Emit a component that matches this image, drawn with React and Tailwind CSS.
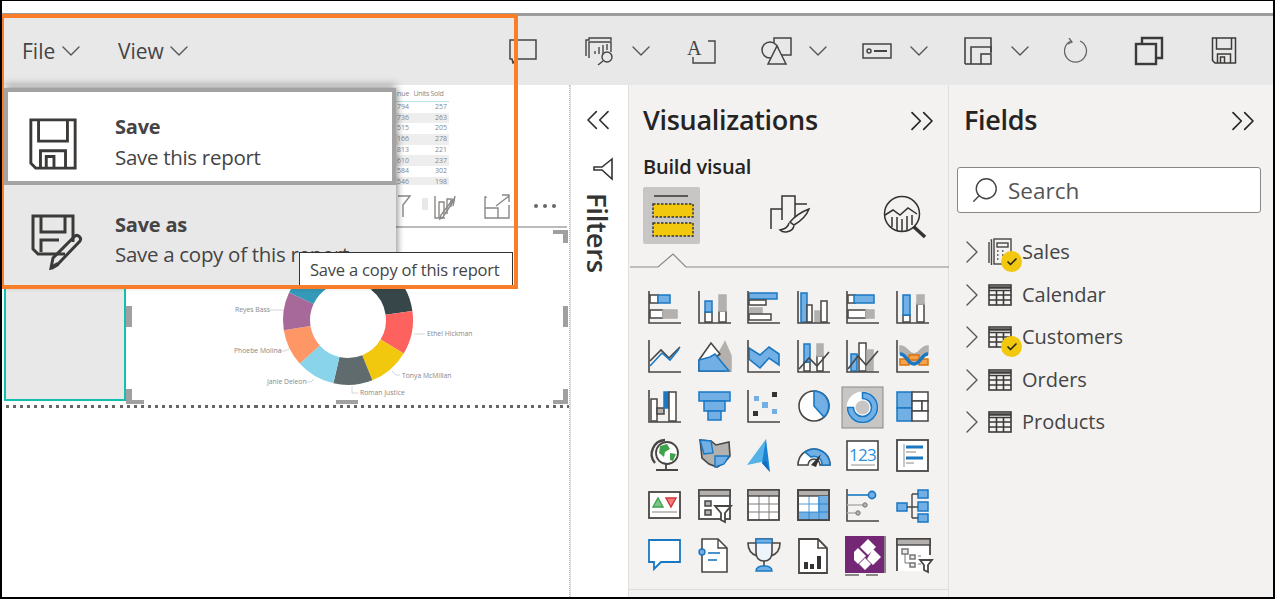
import { ChevronDown, ChevronRight, ChevronsLeft, ChevronsRight, Search, Check } from 'lucide-react';

const D = '#484644';
const B = '#1a78c2';
const F = '#71afe5';
const G = '#b3b0ad';

const font = { fontFamily: '"Open Sans", sans-serif' };

// axis shared by most of the chart icons
const Axis = () => <path d="M1 0v32h32" fill="none" stroke={D} strokeWidth="1.6" />;
const Box = ({ x, y, w, h, f = '#fff', s = D }) => (
  <rect x={x} y={y} width={w} height={h} fill={f} stroke={s} strokeWidth="1.5" />
);
const Line = ({ d, s = D, w = 1.6, f = 'none' }) => <path d={d} fill={f} stroke={s} strokeWidth={w} />;

const vizIcons = [
  <><Box x={2} y={4} w={8} h={8} /><Box x={10} y={4} w={12} h={8} f={F} s={B} /><Box x={2} y={19} w={13} h={8} /><Box x={15} y={19} w={14} h={8} f={G} s={G} /><Axis /></>,
  <><Box x={7} y={21} w={7} h={10} /><Box x={7} y={10} w={7} h={11} f={F} s={B} /><Box x={21} y={20} w={7} h={11} /><Box x={21} y={4} w={7} h={16} f={G} s={G} /><Axis /></>,
  <><Box x={2} y={2} w={28} h={6} f={F} s={B} /><Box x={2} y={9} w={17} h={5} /><Box x={2} y={17} w={13} h={5} f={G} s={G} /><Box x={2} y={23} w={22} h={6} /><Axis /></>,
  <><Box x={4} y={2} w={6} h={29} f={F} s={B} /><Box x={10} y={14} w={5} h={17} /><Box x={18} y={20} w={5} h={11} f={G} s={G} /><Box x={24} y={10} w={6} h={21} /><Axis /></>,
  <><Box x={2} y={4} w={7} h={8} /><Box x={8} y={4} w={20} h={8} f={F} s={B} /><Box x={2} y={19} w={18} h={8} /><Box x={20} y={19} w={8} h={8} f={G} s={G} /><Axis /></>,
  <><Box x={7} y={24} w={7} h={7} /><Box x={7} y={4} w={7} h={20} f={F} s={B} /><Box x={21} y={13} w={7} h={18} /><Box x={21} y={4} w={7} h={9} f={G} s={G} /><Axis /></>,

  <><Axis /><Line d="M2 21l11-11 8 8 11-11" /><Line d="M2 26l12-13 8 7 9-11" s={B} /></>,
  <><Line d="M21 31V13l6-11 6 14v15z" f={G} s={G} /><Line d="M1 20L13 3l9 11-7 5 11 12H1z" f="#fff" /><Line d="M1 31V20l11-3 5-3 14 17z" f={F} s={B} /></>,
  <><Line d="M2 8l11 7 9-8 10 7v11l-10-7-9 10-11-9z" f={F} s={B} /><Axis /></>,
  <><Box x={7} y={22} w={6} h={9} /><Box x={7} y={4} w={6} h={18} f={F} s={B} /><Box x={20} y={16} w={6} h={15} /><Box x={20} y={4} w={6} h={12} f={G} s={G} /><Line d="M2 29l10-11 8 8 12-14" /><Axis /></>,
  <><Box x={5} y={14} w={6} h={17} f={F} s={B} /><Box x={13} y={3} w={7} h={28} /><Box x={21} y={10} w={6} h={21} f={G} s={G} /><Line d="M2 29l10-13 8 9 12-14" /><Axis /></>,
  <><Line d="M4 6c8 0 8 8 14 8s6-8 14-8v8c-8 0-8 8-14 8S12 14 4 14z" f={G} s={G} /><Box x={4} y={19} w={9} h={6} f="#f7a14a" s="#d9730d" /><Box x={23} y={19} w={9} h={6} f="#f7a14a" s="#d9730d" /><Box x={13} y={15} w={10} h={5} f="#f7a14a" s="#d9730d" /><Line d="M4 14c7 0 7 10 14 10s7-10 14-10" s={B} w={3.4} /><Axis /></>,

  <><Box x={3} y={9} w={6} h={22} /><Box x={9} y={18} w={7} h={6} f={G} s={D} /><Box x={16} y={2} w={5} h={16} f={B} s={B} /><Box x={21} y={2} w={7} h={29} /><Axis /></>,
  <><Box x={1} y={2} w={31} h={9} f={F} s={B} /><Box x={6} y={11} w={21} h={10} f={F} s={B} /><Box x={10} y={21} w={13} h={9} f={F} s={B} /></>,
  <><Axis /><rect x={7} y={6} width={5} height={5} fill={F} /><rect x={15} y={12} width={6} height={6} fill={F} /><rect x={25} y={2} width={5} height={5} fill="#333" /><rect x={6} y={21} width={5} height={5} fill="#333" /><rect x={25} y={19} width={5} height={5} fill={F} /></>,
  <><circle cx={17} cy={16} r={15} fill="#fff" stroke={D} strokeWidth="1.6" /><path d="M17 1a15 15 0 0 1 10 26L17 16z" fill={F} stroke={B} strokeWidth="1.6" /></>,
  <><rect x={-4} y={-3} width={41} height={41} fill="#c8c6c4" stroke="#8a8886" strokeWidth="1" /><circle cx={16.5} cy={17.5} r={11.5} fill="none" stroke="#fff" strokeWidth="9" /><path d="M16.5 2.5a15 15 0 1 1-15 15h6a9 9 0 1 0 9-9z" fill={F} stroke={B} strokeWidth="1.5" /></>,
  <><Box x={1} y={2} w={15} h={16} f={F} s={B} /><Box x={1} y={18} w={15} h={13} f={F} s={B} /><Box x={16} y={2} w={16} h={9} /><Box x={16} y={11} w={10} h={10} /><Box x={26} y={11} w={6} h={10} /><Box x={16} y={21} w={16} h={10} /></>,

  <><path d="M17 1a14 14 0 0 0-10 23" fill="none" stroke={D} strokeWidth="2.4" /><circle cx={19} cy={14} r={11} fill="#fff" stroke={D} strokeWidth="1.8" /><path d="M12 7l7-2 3 5-5 3-1 5-5-4zM22 14l6 1-3 7-3-1z" fill="#3fa34d" /><path d="M18 24v6M8 31h22" stroke={D} strokeWidth="1.8" /></>,
  <><path d="M2 1l11 1 5 4 13-3 1 14-6 7-7 4-8-3-7-6z" fill={G} stroke={D} strokeWidth="1.6" /><path d="M2 1l11 1 2 12-9 1zM17 17h14l-5 8-9 3z" fill={F} stroke={B} strokeWidth="1.4" /></>,
  <><path d="M19 0L0 26l19-4z" fill="#55b2e8" /><path d="M19 0l4 33-8-9z" fill="#1a82d4" /><path d="M19 22l4 11-8-9z" fill="#0f6cbd" /></>,
  <><path d="M1 26a16 16 0 0 1 32 0H23a6 6 0 0 0-12 0z" fill="#fff" stroke={D} strokeWidth="1.6" /><path d="M8 13a16 16 0 0 1 25 13h-8a8 8 0 0 0-11-8z" fill={F} stroke={B} strokeWidth="1.6" /><path d="M14 26l10-11-5 13z" fill="#333" /></>,
  <><rect x={1} y={2} width={31} height={29} fill="#fff" stroke={D} strokeWidth="1.6" /><text x={16.5} y={22} textAnchor="middle" fontSize="17" fill="#2d8fdc" fontFamily='"Open Sans", sans-serif' letterSpacing="-0.8">123</text><path d="M5 26h24" stroke={G} strokeWidth="1.4" /></>,
  <><rect x={1} y={1} width={31} height={31} fill="#fff" stroke={D} strokeWidth="1.8" /><path d="M8 5v23" stroke={G} strokeWidth="1.4" /><path d="M10 8h17M10 19h17" stroke={B} strokeWidth="3.2" /><path d="M10 13h10M10 24h8" stroke={G} strokeWidth="1.6" /></>,

  <><rect x={1} y={3} width={31} height={26} fill="#fff" stroke={D} strokeWidth="1.8" /><path d="M5 18l5-9 5 9z" fill="#7fc48a" stroke="#3fa34d" strokeWidth="1.4" /><path d="M18 9h10l-5 9z" fill="#f08080" stroke="#d13438" strokeWidth="1.4" /><path d="M4 23h25" stroke={G} strokeWidth="1.6" /></>,
  <><rect x={1} y={1} width={31} height={29} fill="#fff" stroke={D} strokeWidth="1.8" /><rect x={1} y={1} width={31} height={6} fill={G} stroke={D} strokeWidth="1.4" /><Box x={7} y={12} w={6} h={5} f={G} /><Box x={7} y={21} w={6} h={5} f={G} /><path d="M17 17h16l-6 7v9l-4-2v-7z" fill="#fff" stroke={D} strokeWidth="1.8" /></>,
  <><rect x={1} y={1} width={31} height={30} fill="#fff" stroke={D} strokeWidth="1.8" /><rect x={1} y={1} width={31} height={6} fill={G} stroke={D} strokeWidth="1.4" /><path d="M12 7v24M22 7v24M1 15h31M1 23h31" stroke={D} strokeWidth="1" opacity=".7" /></>,
  <><rect x={1} y={1} width={31} height={30} fill="#fff" stroke={D} strokeWidth="1.8" /><rect x={1} y={1} width={31} height={6} fill={G} stroke={D} strokeWidth="1.4" /><rect x={21} y={7} width={11} height={24} fill={F} /><rect x={1} y={23} width={31} height={8} fill={F} /><path d="M12 7v24M22 7v24M1 15h31M1 23h31" stroke={B} strokeWidth="1" opacity=".75" /><rect x={1} y={1} width={31} height={30} fill="none" stroke={D} strokeWidth="1.8" /></>,
  <><Axis /><path d="M1 6h22" stroke={B} strokeWidth="1.6" /><path d="M1 16h18M1 24h11" stroke={G} strokeWidth="1.6" /><circle cx={26} cy={6} r={3.6} fill={F} stroke={B} strokeWidth="1.6" /><circle cx={19} cy={16} r={2.2} fill={G} stroke="#777" /><circle cx={12} cy={24} r={2.2} fill={G} stroke="#777" /></>,
  <><Box x={1} y={14} w={10} h={8} f={F} s={B} /><Box x={22} y={1} w={10} h={8} f={F} s={B} /><Box x={22} y={13} w={10} h={9} f={F} s={B} /><Box x={22} y={25} w={10} h={8} f={F} s={B} /><path d="M11 18h11M16 5v24M16 5h6M16 29h6" fill="none" stroke={D} strokeWidth="1.4" /></>,

  <><path d="M1 2h31v22H13l-7 7v-7H1z" fill="#fff" stroke={B} strokeWidth="1.8" /></>,
  <><path d="M4 1h16l9 9v24H4z" fill="#fff" stroke={D} strokeWidth="1.6" /><path d="M20 1v9h9" fill="none" stroke={D} strokeWidth="1.4" /><circle cx={4} cy={14} r={3} fill={F} stroke={B} strokeWidth="1.4" /><path d="M10 15h12" stroke={B} strokeWidth="1.6" /><path d="M10 22h9" stroke={B} strokeWidth="1.6" /></>,
  <><path d="M9 1h16v13c0 6-3 9-8 9s-8-3-8-9z" fill="#eef4fb" stroke={D} strokeWidth="1.6" /><rect x={9} y={1} width={16} height={4} fill={F} stroke={B} strokeWidth="1.2" /><path d="M9 5H1c0 7 3 11 9 13M25 5h8c0 7-3 11-9 13M17 23v5" fill="none" stroke={D} strokeWidth="1.6" /><path d="M9 33c0-4 3-5 8-5s8 1 8 5z" fill={F} stroke={B} strokeWidth="1.4" /></>,
  <><path d="M2 1h19l9 9v25H2z" fill="#fff" stroke={D} strokeWidth="1.8" /><path d="M21 1v9h9" fill="none" stroke={D} strokeWidth="1.6" /><rect x={7} y={24} width={4} height={7} fill="#333" /><rect x={13} y={26} width={4} height={5} fill="#333" /><rect x={20} y={18} width={4} height={13} fill="#333" /></>,
  <><rect x={-1} y={-2} width={39} height={37} fill="#742774" /><path d="M38 -2h2v37h-2z" fill="#8a8886" /><path d="M22 1l8 8-8 8-8-8zM12 10l8 8-8 8-4-4v-8zM27 11l8 8-8 8-6-6zM19 20l6 6-6 6-6-6z" fill="#fff" /><path d="M-1 37h14M20 37h12" stroke="#8a8886" strokeWidth="1.8" /></>,
  <><rect x={1} y={1} width={33} height={32} fill="#fff" stroke="none" /><path d="M1 33V1h33v16" fill="none" stroke={D} strokeWidth="1.8" /><rect x={1} y={1} width={33} height={6} fill={G} stroke={D} strokeWidth="1.4" /><Box x={6} y={11} w={6} h={5} f="#eee" s="#777" /><Box x={14} y={17} w={5} h={4} f="#eee" s="#777" /><Box x={14} y={25} w={5} h={4} f="#eee" s="#777" /><path d="M9 16v9h5M22 18h3M22 26h3" fill="none" stroke="#777" /><path d="M24 22h12l-4 5v7l-4-2v-5z" fill="#fff" stroke={D} strokeWidth="1.8" /></>,
];

const tableRows = [['794', '257'], ['736', '263'], ['515', '205'], ['166', '278'], ['813', '221'], ['610', '237'], ['584', '302'], ['546', '198']];

const fields = [
  { name: 'Sales', calc: true, badge: true },
  { name: 'Calendar' },
  { name: 'Customers', badge: true },
  { name: 'Orders' },
  { name: 'Products' },
];

const slices = [
  { from: 0, to: 38, color: '#01b8aa' },
  { from: 38, to: 82, color: '#374649' },
  { from: 82, to: 121, color: '#fd625e' },
  { from: 121, to: 158, color: '#f2c80f' },
  { from: 158, to: 193, color: '#5f6b6d' },
  { from: 193, to: 228, color: '#8ad4eb' },
  { from: 228, to: 261, color: '#fe9666' },
  { from: 261, to: 295, color: '#a66999' },
  { from: 295, to: 360, color: '#3599b8' },
];

const labels = [
  { t: 'Reyes Bass', x: 235, y: 312, d: 'M270 310H283' },
  { t: 'Ethel Hickman', x: 427, y: 336, d: 'M414 334H425' },
  { t: 'Phoebe Molina', x: 234, y: 353, d: 'M277 351H285L289 349' },
  { t: 'Tonya McMillan', x: 402, y: 378, d: 'M392 371L396 375H400' },
  { t: 'Janie Deleon', x: 267, y: 384, d: 'M306 382H311L314 379' },
  { t: 'Roman Justice', x: 360, y: 395, d: 'M352 386V393H358' },
];

const CX = 348;
const CY = 320;
const R1 = 65;
const R2 = 38;

function polar(r, deg) {
  const a = ((deg - 90) * Math.PI) / 180;
  return [CX + r * Math.cos(a), CY + r * Math.sin(a)];
}

function slicePath(from, to) {
  const [x1, y1] = polar(R1, from);
  const [x2, y2] = polar(R1, to);
  const [x3, y3] = polar(R2, to);
  const [x4, y4] = polar(R2, from);
  return `M${x1} ${y1}A${R1} ${R1} 0 0 1 ${x2} ${y2}L${x3} ${y3}A${R2} ${R2} 0 0 0 ${x4} ${y4}Z`;
}

function Chevron() {
  return <ChevronDown className="w-[32px] h-[32px] text-[#555]" strokeWidth={1} />;
}

function SaveIcon({ className }) {
  return (
    <svg viewBox="0 0 50 54" className={className} fill="none" stroke="#3b3a39" strokeWidth="3">
      <path d="M2 2h46v50H7l-5-5z" />
      <path d="M10 2v22h30V2" />
      <path d="M12 52V34h26v18M18 52V40h8v12" />
    </svg>
  );
}

function TableIcon() {
  return (
    <svg viewBox="0 0 24 22" className="w-6 h-[22px]" fill="none" stroke="#3b3a39" strokeWidth="1.6">
      <rect x="1" y="1" width="22" height="20" />
      <path d="M1 6.5h22M1 11h22M1 16h22M8.5 6.5V21M15.5 6.5V21" />
      <path d="M1 3.5h22" strokeWidth="2.5" />
    </svg>
  );
}

function CalcIcon() {
  return (
    <svg viewBox="0 0 24 28" className="w-6 h-7" fill="none" stroke="#484644" strokeWidth="1.4">
      <path d="M1 25V4M3.5 27V2h-1" />
      <rect x="6" y="1" width="17" height="25" fill="#f3f2f1" />
      <rect x="9" y="5" width="11" height="4" />
      <path d="M9 13h2M14 13h2M9 17h2M14 17h2M9 21h2M14 21h2" strokeDasharray="1.5 1" />
    </svg>
  );
}

function Toolbar() {
  return (
    <div className="h-[69px] bg-[#e8e8e8] flex items-center pl-[20px] text-[#444]">
      <span className="w-[32px] text-[21px] pt-[2px]">File</span>
      <span className="ml-[1px]"><Chevron /></span>
      <span className="ml-[31px] w-[44px] text-[21px] pt-[2px]">View</span>
      <span className="ml-[1px]"><Chevron /></span>

      {/* comment */}
      <svg viewBox="0 0 30 26" className="ml-[313px] w-[30px] h-[26px]" fill="none" stroke="#444" strokeWidth="1.5">
        <path d="M2 2h26v19H8l-3 4-1-4H2z" />
      </svg>
      {/* new visual */}
      <svg viewBox="0 0 30 30" className="ml-[47px] w-[30px] h-[30px]" fill="none" stroke="#444" strokeWidth="1.4">
        <path d="M1 20V4h3V2h22v3" /><path d="M4 22V6h22v10" />
        <path d="M10 18v-3M14 18v-7M18 18V9M22 14V8" stroke="#777" strokeWidth="2" />
        <circle cx="22" cy="21" r="5" /><path d="M18 25l-5 4" />
      </svg>
      <span className="ml-[10px]"><Chevron /></span>
      {/* text box */}
      <svg viewBox="0 0 30 28" className="ml-[29px] w-[30px] h-[28px]" fill="none" stroke="#444" strokeWidth="1.4">
        <path d="M22 4h7v22H7v-6" />
        <text x="1" y="18" fontSize="20" fill="#444" stroke="none" fontFamily='"Liberation Serif", serif'>A</text>
      </svg>
      {/* shapes */}
      <svg viewBox="0 0 32 30" className="ml-[45px] w-[32px] h-[30px]" fill="none" stroke="#444" strokeWidth="1.5">
        <rect x="13" y="2" width="17" height="17" fill="#e8e8e8" />
        <circle cx="9" cy="14" r="8" fill="#e8e8e8" />
        <path d="M16 10l9 18H7z" fill="#e8e8e8" />
      </svg>
      <span className="ml-[9px]"><Chevron /></span>
      {/* button */}
      <svg viewBox="0 0 30 16" className="ml-[28px] w-[30px] h-[16px]" fill="none" stroke="#444" strokeWidth="1.5">
        <rect x="1" y="1" width="28" height="14" />
        <circle cx="7" cy="8" r="2" /><path d="M12 8h13" strokeWidth="2" />
      </svg>
      <span className="ml-[11px]"><Chevron /></span>
      {/* page layout */}
      <svg viewBox="0 0 30 30" className="ml-[28px] w-[30px] h-[30px]" fill="none" stroke="#444" strokeWidth="1.6">
        <path d="M2 28V2h26v14" /><path d="M8 28V11h20v6" /><path d="M2 28h16" /><rect x="18" y="18" width="10" height="10" />
      </svg>
      <span className="ml-[11px]"><Chevron /></span>
      {/* refresh */}
      <svg viewBox="0 0 24 26" className="ml-[28px] w-[24px] h-[26px]" fill="none" stroke="#666" strokeWidth="1.3">
        <path d="M16 3a11 11 0 1 1-9 0" /><path d="M5 0l3 4-4 2" />
      </svg>
      {/* copy */}
      <svg viewBox="0 0 30 30" className="ml-[46px] w-[30px] h-[30px]" fill="none" stroke="#3b3a39" strokeWidth="2.4">
        <rect x="2" y="8" width="20" height="20" /><path d="M8 8V2h20v20h-6" />
      </svg>
      <SaveIcon className="ml-[47px] w-[26px] h-[27px]" />
    </div>
  );
}

function ReportCanvas() {
  return (
    <div className="relative w-[568px] border-r border-dotted border-[#bbb] bg-white overflow-hidden">
      {/* table visual */}
      <div className="absolute left-[393px] top-[3px] w-[172px] h-[140px] border-b-[2px] border-[#bbb] text-[7px] text-[#888]">
        <div className="flex gap-[4px] h-[14px] items-center w-[54px] border-b border-[#b5e5e0] pl-[2px] whitespace-nowrap">
          <span>nue</span><span className="tracking-[-0.3px]">Units Sold</span>
        </div>
        <div className="h-[83px] overflow-hidden">
          {tableRows.map((row, i) => (
            <div key={row[0]} className={`flex justify-between w-[54px] h-[10.7px] items-center px-[2px] ${i % 2 === 1 ? 'bg-[#eeeeee]' : ''}`}>
              <span>{row[0]}</span><span>{row[1]}</span>
            </div>
          ))}
        </div>
      </div>

      {/* visual header actions */}
      <svg viewBox="0 0 170 30" className="absolute left-[394px] top-[107px] w-[170px] h-[30px]" fill="none" stroke="#8a8886" strokeWidth="1.4">
        <path d="M2 4h12l-7 9v12" />
        <rect x="26" y="6" width="6" height="12" fill="#e8e8e8" stroke="none" />
        <path d="M39 4v22h10M43 26V10h5v13M51 22V7h4v8M59 4l-2 10" />
        <path d="M58 8L47 25l-3 2 1-4 12-16z" />
        <path d="M90 6v-1h-1V26h24V13M89 16h13v10" />
        <path d="M100 14L113 4M106 3h7v7" />
      </svg>
      <div className="absolute left-[532px] top-[119px] flex gap-[5px]">
        <span className="w-[4px] h-[4px] rounded-full bg-[#666]" />
        <span className="w-[4px] h-[4px] rounded-full bg-[#666]" />
        <span className="w-[4px] h-[4px] rounded-full bg-[#666]" />
      </div>

      {/* selected empty visual */}
      <div className="absolute left-[2px] top-[191px] w-[122px] h-[125px] bg-[#e8e8e8] border-2 border-[#10c0b0]" />

      {/* donut chart */}
      <svg viewBox="2 85 568 330" className="absolute left-0 top-0 w-[568px] h-[330px]">
        {slices.map((s) => <path key={s.color} d={slicePath(s.from, s.to)} fill={s.color} />)}
        {labels.map((l) => (
          <g key={l.t}>
            <path d={l.d} fill="none" stroke="#ccc" strokeWidth="0.8" />
            <text x={l.x} y={l.y} fontSize="6.8" fill="#888" fontFamily='"Open Sans", sans-serif'>{l.t}</text>
          </g>
        ))}
      </svg>

      {/* resize handles */}
      <div className="absolute left-[124px] top-[221px] w-[6px] h-[21px] bg-[#a0a0a0]" />
      <div className="absolute left-[561px] top-[221px] w-[5px] h-[21px] bg-[#a0a0a0]" />
      <div className="absolute left-[551px] top-[145px] w-[15px] h-[4px] bg-[#a0a0a0]" />
      <div className="absolute left-[561px] top-[145px] w-[5px] h-[13px] bg-[#a0a0a0]" />
      <div className="absolute left-[124px] top-[315px] w-[18px] h-[4px] bg-[#a0a0a0]" />
      <div className="absolute left-[124px] top-[304px] w-[6px] h-[12px] bg-[#a0a0a0]" />
      <div className="absolute left-[334px] top-[315px] w-[22px] h-[4px] bg-[#a0a0a0]" />
      <div className="absolute left-[551px] top-[315px] w-[15px] h-[4px] bg-[#a0a0a0]" />
      <div className="absolute left-[561px] top-[304px] w-[5px] h-[12px] bg-[#a0a0a0]" />

      {/* page edge */}
      <div className="absolute left-[4px] right-0 top-[320px] h-[3px] bg-[repeating-linear-gradient(90deg,#666_0_3px,transparent_3px_7.1px)]" />
    </div>
  );
}

function FiltersPane() {
  return (
    <div className="w-[58px] bg-white flex flex-col items-center text-[#333] border-l border-[#ddd]">
      <ChevronsLeft className="mt-[15px] -ml-[3px] w-[40px] h-[40px]" strokeWidth={1} />
      <svg viewBox="0 0 22 24" className="mt-[17px] ml-[6px] w-[22px] h-[24px]" fill="none" stroke="#333" strokeWidth="1.6">
        <path d="M20 2L10 10H2v3h8l10 9z" />
      </svg>
      <span className="mt-[12px] -ml-[5px] text-[27.5px] font-semibold [writing-mode:vertical-rl] leading-none tracking-[-0.3px]">Filters</span>
    </div>
  );
}

function VizPane() {
  return (
    <div className="w-[320px] bg-[#f3f2f1] border-l border-[#e1dfdd] pl-[14px] text-[#252423] relative">
      <div className="flex items-center justify-between h-[69px] pr-[6px] pt-[2px]">
        <span className="text-[27px] font-semibold tracking-[-0.3px]">Visualizations</span>
        <ChevronsRight className="w-[40px] h-[40px]" strokeWidth={1} />
      </div>
      <div className="-mt-[2px] text-[20px] font-semibold leading-[30px] tracking-[-0.2px]">Build visual</div>
      <div className="mt-[5px] flex items-start">
        <div className="w-[57px] h-[57px] bg-[#c8c6c4] rounded-[2px] flex items-center justify-center">
          <svg viewBox="0 0 44 44" className="w-[44px] h-[44px]">
            <path d="M4 2h34" stroke="#333" strokeWidth="1.4" />
            <rect x="3" y="10" width="40" height="13" fill="#f2c80f" stroke="#333" strokeWidth="1.4" strokeDasharray="2.5 1.5" />
            <rect x="3" y="29" width="40" height="13" fill="#f2c80f" stroke="#333" strokeWidth="1.4" strokeDasharray="2.5 1.5" />
          </svg>
        </div>
        <svg viewBox="0 0 42 42" className="ml-[70px] mt-[8px] w-[42px] h-[42px]" fill="none" stroke="#333" strokeWidth="1.5">
          <path d="M1 34V14h11M12 25V1h13v28M25 9h12" />
          <path d="M39 14c-3 8-8 12-15 16l-4-3c5-6 11-10 19-13zM19 28c-1 5-5 6-9 7 3 3 12 3 14-4" fill="#f3f2f1" />
        </svg>
        <svg viewBox="0 0 44 44" className="ml-[71px] mt-[8px] w-[44px] h-[44px]" fill="none" stroke="#333" strokeWidth="1.5">
          <circle cx="19" cy="19" r="17.5" />
          <path d="M2 20l8-5 7 5 8-7 9 6" />
          <path d="M9 22v10M14 22v13M19 24v12M24 21v14M29 20v10" />
          <path d="M31 32l11 10" strokeWidth="3.5" />
        </svg>
      </div>
      {/* active tab notch */}
      <svg viewBox="0 0 320 16" className="mt-[8px] -ml-[14px] w-[320px] h-[16px]" fill="none" stroke="#8a8886" strokeWidth="1.2">
        <path d="M1 15h28l15-13 13 13h263" fill="#f3f2f1" />
      </svg>
      <div className="mt-[23px] ml-[5px] grid grid-cols-[repeat(6,49.6px)] auto-rows-[49.4px]">
        {vizIcons.map((icon, i) => (
          <svg key={i} viewBox="0 0 34 34" className="w-[34px] h-[34px] overflow-visible">{icon}</svg>
        ))}
      </div>
      <div className="absolute left-0 right-0 bottom-[7px] h-px bg-[#dddddd]" />
    </div>
  );
}

function FieldsPane() {
  return (
    <div className="flex-1 bg-[#f3f2f1] border-l border-[#e1dfdd] text-[#252423]">
      <div className="flex items-center justify-between h-[69px] pl-[15px] pr-[10px] pt-[2px]">
        <span className="text-[27px] font-semibold tracking-[-0.3px]">Fields</span>
        <ChevronsRight className="w-[40px] h-[40px]" strokeWidth={1} />
      </div>
      <div className="mt-[13px] ml-[8px] w-[304px] h-[46px] bg-white border border-[#8a8886] rounded-[3px] flex items-center pl-[12px]">
        <Search className="w-[30px] h-[30px] text-[#444] -scale-x-100" strokeWidth={1.1} />
        <span className="ml-[8px] pt-[2px] text-[22.5px] text-[#555]">Search</span>
      </div>
      <div className="mt-[18px] ml-[16px]">
        {fields.map((f) => (
          <div key={f.name} className="h-[42.5px] flex items-center text-[#444]">
            <ChevronRight className="w-[40px] h-[40px] -ml-[13px] text-[#555]" strokeWidth={0.8} />
            <div className="relative -ml-[4px] w-[24px] h-[26px] flex items-center justify-center">
              {f.calc ? <CalcIcon /> : <TableIcon />}
              {f.badge && (
                <span className="absolute left-[13px] top-[12px] w-[21px] h-[21px] rounded-full bg-[#f2c80f] flex items-center justify-center">
                  <Check className="w-[12px] h-[12px] text-[#252423]" strokeWidth={3.4} />
                </span>
              )}
            </div>
            <span className="ml-[10px] text-[20px]">{f.name}</span>
          </div>
        ))}
      </div>
    </div>
  );
}

export default function App() {
  return (
    <div className="relative w-[1275px] h-[599px] overflow-hidden bg-white border-t border-l-2 border-r-2 border-b-2 border-black flex flex-col" style={font}>
      <div className="h-[12px] shrink-0" />
      <div className="h-[3px] shrink-0 bg-[#9c9c9c]" />
      <Toolbar />
      <div className="flex-1 flex min-h-0">
        <ReportCanvas />
        <FiltersPane />
        <VizPane />
        <FieldsPane />
      </div>

      {/* file menu */}
      <div className="absolute left-[2px] top-[87px] w-[392px] h-[197px] bg-[#e8e8e8] shadow-[0_-3px_8px_rgba(0,0,0,0.35),2px_2px_6px_rgba(0,0,0,0.2)] text-[#444]">
        <div className="flex items-center h-[97px] bg-white border-[4px] border-[#a3a3a3] pl-[20px] pt-[14px]">
          <SaveIcon className="w-[50px] h-[52px]" />
          <div className="ml-[37px] -mt-[4px]">
            <div className="text-[20px] font-bold leading-[30px] tracking-[-0.2px]">Save</div>
            <div className="text-[20.5px] leading-[30px] tracking-[-0.3px]">Save this report</div>
          </div>
        </div>
        <div className="flex items-center h-[100px] pl-[27px] pt-[14px]">
          <svg viewBox="0 0 54 56" className="w-[54px] h-[56px]" fill="none" stroke="#3b3a39" strokeWidth="3">
            <path d="M34 40H7l-5-5V2h40v26" />
            <path d="M10 2v16h24V2M10 38V26h18" />
            <path d="M20 54l2-10L44 22c3-2 7 2 5 5L27 50z" />
            <path d="M20 54l7-4" strokeWidth="4" />
          </svg>
          <div className="ml-[30px] -mt-[6px]">
            <div className="text-[20px] font-bold leading-[30px] tracking-[-0.2px]">Save as</div>
            <div className="-mt-[1px] text-[20.5px] leading-[30px] tracking-[-0.3px] whitespace-nowrap">Save a copy of this report</div>
          </div>
        </div>
      </div>

      {/* tooltip */}
      <div className="absolute left-[297px] top-[251px] w-[214px] h-[36px] bg-white border border-[#333] flex items-center pl-[10px] text-[16.5px] text-[#444] tracking-[-0.2px] whitespace-nowrap">
        Save a copy of this report
      </div>

      {/* highlight */}
      <div className="absolute left-[-2px] top-[13px] w-[518px] h-[275px] border-4 border-[#fa7d2a]" />
    </div>
  );
}
